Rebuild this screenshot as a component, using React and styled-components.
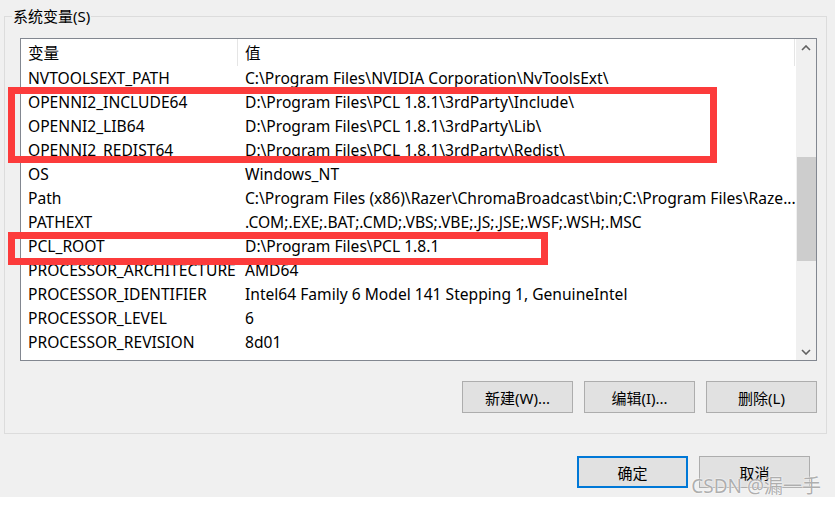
import React from 'react';
import styled, { createGlobalStyle } from 'styled-components';

const GlobalStyle = createGlobalStyle`
    html, body {
        margin: 0;
        padding: 0;
        background: #ffffff;
    }
    body {
        font-family: "Noto Sans", "Noto Sans CJK SC", sans-serif;
        font-size: 15px;
        color: #000;
    }
`;

const variables = [
    ['NVTOOLSEXT_PATH', 'C:\\Program Files\\NVIDIA Corporation\\NvToolsExt\\'],
    ['OPENNI2_INCLUDE64', 'D:\\Program Files\\PCL 1.8.1\\3rdParty\\Include\\'],
    ['OPENNI2_LIB64', 'D:\\Program Files\\PCL 1.8.1\\3rdParty\\Lib\\'],
    ['OPENNI2_REDIST64', 'D:\\Program Files\\PCL 1.8.1\\3rdParty\\Redist\\'],
    ['OS', 'Windows_NT'],
    ['Path', 'C:\\Program Files (x86)\\Razer\\ChromaBroadcast\\bin;C:\\Program Files\\Raze...'],
    ['PATHEXT', '.COM;.EXE;.BAT;.CMD;.VBS;.VBE;.JS;.JSE;.WSF;.WSH;.MSC'],
    ['PCL_ROOT', 'D:\\Program Files\\PCL 1.8.1'],
    ['PROCESSOR_ARCHITECTURE', 'AMD64'],
    ['PROCESSOR_IDENTIFIER', 'Intel64 Family 6 Model 141 Stepping 1, GenuineIntel'],
    ['PROCESSOR_LEVEL', '6'],
    ['PROCESSOR_REVISION', '8d01'],
];

const Chevron = ({ down }) => (
    <svg width="10" height="6" viewBox="0 0 10 6">
        <polyline
            points={down ? '1,1 5,5 9,1' : '1,5 5,1 9,5'}
            fill="none"
            stroke="#606060"
            strokeWidth="1.6"
        />
    </svg>
);

const App = () => {
    return (
        <>
            <GlobalStyle />
            <Window>
                <GroupBox>
                    <Legend>系统变量(S)</Legend>
                    <ListBox>
                        <ListBody>
                            <HeaderRow>
                                <NameCell>变量</NameCell>
                                <ValueCell>值</ValueCell>
                            </HeaderRow>
                            {variables.map(([name, value]) => (
                                <Row key={name}>
                                    <NameCell>{name}</NameCell>
                                    <ValueCell>{value}</ValueCell>
                                </Row>
                            ))}
                        </ListBody>
                        <ScrollBar>
                            <ArrowButton>
                                <Chevron />
                            </ArrowButton>
                            <Track>
                                <Thumb />
                            </Track>
                            <ArrowButton>
                                <Chevron down />
                            </ArrowButton>
                        </ScrollBar>
                    </ListBox>
                    <ButtonRow>
                        <Button>新建(W)...</Button>
                        <Button>编辑(I)...</Button>
                        <Button>删除(L)</Button>
                    </ButtonRow>
                </GroupBox>
                <DialogButtons>
                    <Button $default>确定</Button>
                    <Button>取消</Button>
                </DialogButtons>
                {/* 标注框 */}
                <Mark $left={8} $top={87} $width={709} $height={76} />
                <Mark $left={8} $top={232} $width={540} $height={33} />
                <Watermark>CSDN @漏一手</Watermark>
            </Window>
        </>
    );
};

export default App;

const Window = styled.div`
    position: relative;
    width: 835px;
    height: 497px;
    box-sizing: border-box;
    background: #f0f0f0;
    padding-top: 6px;
    overflow: hidden;
`;

const GroupBox = styled.fieldset`
    margin: 0 8px 0 4px;
    padding: 12px 9px 20px 15px;
    border: 1px solid #dcdcdc;
    min-width: 0;
`;

const Legend = styled.legend`
    margin-left: -8px;
    padding: 0 1px;
    line-height: 20px;
    font-size: 15px;
`;

const ListBox = styled.div`
    display: flex;
    height: 323px;
    box-sizing: border-box;
    border: 1px solid #828790;
    background: #ffffff;
`;

const ListBody = styled.div`
    flex: 1;
    min-width: 0;
    overflow: hidden;
    font-size: 15.6px;
`;

const Row = styled.div`
    display: flex;
    align-items: center;
    height: 24px;
    white-space: nowrap;
`;

const HeaderRow = styled(Row)`
    height: 27px;
    margin-right: 1px;
    border-right: 1px solid #e5e5e5;
`;

const NameCell = styled.div`
    width: 217px;
    flex-shrink: 0;
    box-sizing: border-box;
    padding-left: 7px;
    overflow: hidden;
    align-self: stretch;
    display: flex;
    align-items: center;
    ${HeaderRow} & {
        border-right: 1px solid #e5e5e5;
    }
`;

const ValueCell = styled.div`
    flex: 1;
    min-width: 0;
    padding-left: 7px;
    overflow: hidden;
    text-overflow: ellipsis;
`;

const ScrollBar = styled.div`
    width: 20px;
    display: flex;
    flex-direction: column;
    background: #f0f0f0;
`;

const ArrowButton = styled.div`
    height: 17px;
    display: flex;
    align-items: center;
    justify-content: center;
`;

const Track = styled.div`
    flex: 1;
    display: flex;
    flex-direction: column;
    align-items: center;
`;

const Thumb = styled.div`
    margin-top: 101px;
    width: 19px;
    height: 104px;
    background: #cdcdcd;
`;

const ButtonRow = styled.div`
    display: flex;
    justify-content: flex-end;
    gap: 11px;
    margin-top: 20px;
`;

const DialogButtons = styled.div`
    display: flex;
    justify-content: flex-end;
    gap: 11px;
    margin-top: 22px;
    padding-right: 25px;
`;

const Button = styled.button`
    width: 111px;
    height: 32px;
    box-sizing: border-box;
    background: #e1e1e1;
    border: ${(p) => (p.$default ? '2px solid #0078d7' : '1px solid #adadad')};
    border-radius: 0;
    font-family: "Noto Sans", "Noto Sans CJK SC", sans-serif;
    font-size: 15px;
    color: #000;
    padding: 0;
`;

const Mark = styled.div`
    position: absolute;
    left: ${(p) => p.$left}px;
    top: ${(p) => p.$top}px;
    width: ${(p) => p.$width}px;
    height: ${(p) => p.$height}px;
    box-sizing: border-box;
    border: 7px solid #fc3b3b;
    pointer-events: none;
`;

const Watermark = styled.div`
    position: absolute;
    right: 14px;
    bottom: 0;
    font-family: "Noto Sans", "Noto Sans CJK SC", sans-serif;
    font-size: 19px;
    line-height: 22px;
    color: rgba(160, 160, 160, 0.85);
    text-shadow: 0 0 2px #fff, 0 0 1px #fff;
    white-space: nowrap;
`;
